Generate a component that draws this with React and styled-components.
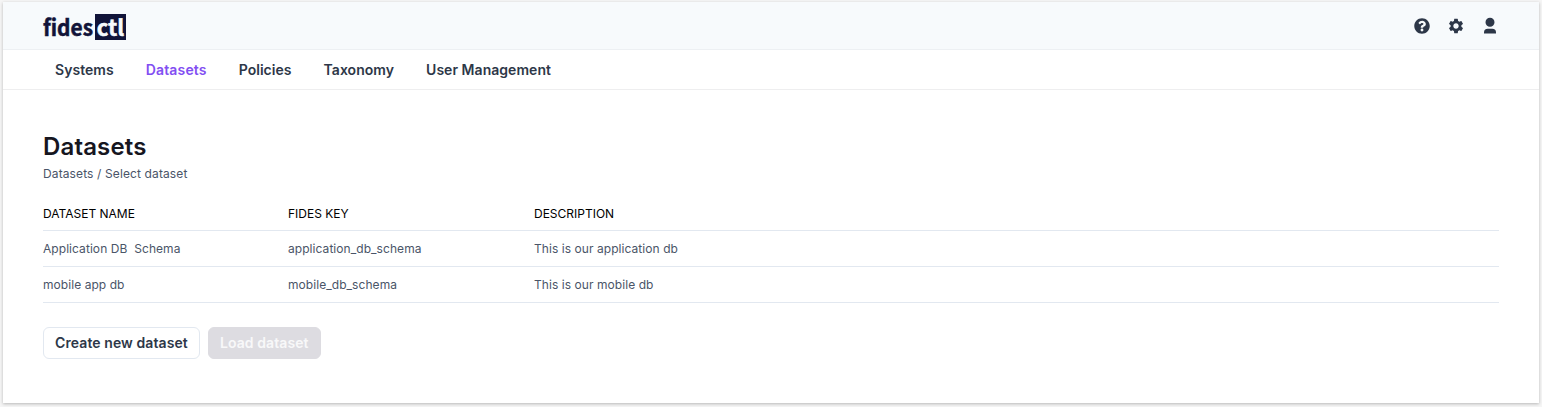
import React from "react";
import styled, { createGlobalStyle } from "styled-components";
import { FaQuestionCircle } from "react-icons/fa";
import { MdSettings } from "react-icons/md";

const GlobalStyle = createGlobalStyle`
  * { box-sizing: border-box; }
  body {
    margin: 0;
    background: #f5f5f5;
    font-family: Inter, "Liberation Sans", sans-serif;
    color: #2d3748;
  }
`;

const Page = styled.div`
  height: 407px;
  padding: 2px 3px 3px;
  overflow: hidden;
`;

const Panel = styled.div`
  height: 401px;
  background: #fff;
  box-shadow: 0 1px 3px rgba(0, 0, 0, 0.25);
`;

const Header = styled.header`
  display: flex;
  align-items: center;
  justify-content: space-between;
  height: 48px;
  padding: 0 40px;
  background: #f7fafc;
  border-bottom: 1px solid #edf0f3;
`;

const LogoSvg = styled.svg`
  display: block;
  margin-top: 3px;
  overflow: visible;
  font: 700 22px "Noto Sans CJK JP", sans-serif;
  stroke-width: 0.5px;
`;

const HeaderIcons = styled.div`
  display: flex;
  gap: 16px;
  padding-top: 1px;
  color: #2d3748;
`;

const IconSlot = styled.span`
  display: flex;
  align-items: center;
  justify-content: center;
  width: 18px;
  height: 18px;
`;

const Nav = styled.nav`
  display: flex;
  align-items: center;
  gap: 8px;
  height: 40px;
  padding: 0 40px;
  border-bottom: 1px solid #eeeeef;
`;

const NavLink = styled.a`
  padding: 0 12px;
  font-size: 14px;
  font-weight: 600;
  line-height: 20px;
  letter-spacing: ${(p) => (p.$active ? "0.16px" : "0.04px")};
  color: ${(p) => (p.$active ? "#824ef2" : "#2d3748")};
`;

const Main = styled.main`
  padding: 41px 40px 0;
`;

const Title = styled.h1`
  margin: 0;
  font-size: 24px;
  font-weight: 600;
  line-height: 32px;
  letter-spacing: 0.15px;
  color: #16161f;
`;

const Breadcrumb = styled.div`
  margin-top: 2px;
  font-size: 12px;
  font-weight: 400;
  line-height: 18px;
  letter-spacing: 0.12px;
  color: #4a5568;
`;

const Table = styled.div`
  margin-top: 13px;
  font-size: 12px;
`;

const Row = styled.div`
  display: grid;
  grid-template-columns: 245px 246px 1fr;
  align-items: center;
  height: ${(p) => (p.$head ? "35px" : "36px")};
  border-bottom: 1px solid #e2e8f0;
  color: ${(p) => (p.$head ? "#000" : "#4a5568")};
  letter-spacing: ${(p) => (p.$head ? "0" : "0.06px")};
  white-space: pre;
`;

const Actions = styled.div`
  display: flex;
  gap: 8px;
  margin-top: 24px;
`;

const Button = styled.button`
  height: 32px;
  padding: 0 11px;
  border: 1px solid ${(p) => (p.disabled ? "#dddce1" : "#e2e8f0")};
  border-radius: 6px;
  background: ${(p) => (p.disabled ? "#dddce1" : "#fff")};
  color: ${(p) => (p.disabled ? "#f8f8f9" : "#2d3748")};
  font: 600 14px/20px Inter, sans-serif;
  letter-spacing: 0.09px;
`;

const links = ["Systems", "Datasets", "Policies", "Taxonomy", "User Management"];

const datasets = [
  { name: "Application DB  Schema", key: "application_db_schema", description: "This is our application db" },
  { name: "mobile app db", key: "mobile_db_schema", description: "This is our mobile db" },
];

function Logo() {
  return (
    <LogoSvg width="83" height="26" viewBox="0 0 83 26">
      <rect x="52" width="31" height="26" fill="#111439" />
      <text x="0" y="21.7" textLength="50" lengthAdjust="spacingAndGlyphs" fill="#111439" stroke="#111439">fides</text>
      <text x="53.8" y="21.7" textLength="27.5" lengthAdjust="spacingAndGlyphs" fill="#f7fafc" stroke="#f7fafc">ctl</text>
    </LogoSvg>
  );
}

function UserIcon() {
  return (
    <svg width="18" height="18" viewBox="0 0 24 24" fill="currentColor">
      <path d="M20 22H4v-1.5a5 5 0 0 1 5-5h6a5 5 0 0 1 5 5zM12 13a6 6 0 1 1 0-12 6 6 0 0 1 0 12z" />
    </svg>
  );
}

export default function App() {
  return (
    <Page>
      <GlobalStyle />
      <Panel>
        <Header>
          <Logo />
          <HeaderIcons>
            <IconSlot><FaQuestionCircle size={16} /></IconSlot>
            <IconSlot><MdSettings size={18} /></IconSlot>
            <IconSlot><UserIcon /></IconSlot>
          </HeaderIcons>
        </Header>
        <Nav>
          {links.map((label) => (
            <NavLink key={label} $active={label === "Datasets"}>{label}</NavLink>
          ))}
        </Nav>
        <Main>
          <Title>Datasets</Title>
          <Breadcrumb>Datasets / Select dataset</Breadcrumb>
          <Table>
            <Row $head>
              <span>DATASET NAME</span>
              <span>FIDES KEY</span>
              <span>DESCRIPTION</span>
            </Row>
            {datasets.map((d) => (
              <Row key={d.key}>
                <span>{d.name}</span>
                <span>{d.key}</span>
                <span>{d.description}</span>
              </Row>
            ))}
          </Table>
          <Actions>
            <Button>Create new dataset</Button>
            <Button disabled>Load dataset</Button>
          </Actions>
        </Main>
      </Panel>
    </Page>
  );
}
